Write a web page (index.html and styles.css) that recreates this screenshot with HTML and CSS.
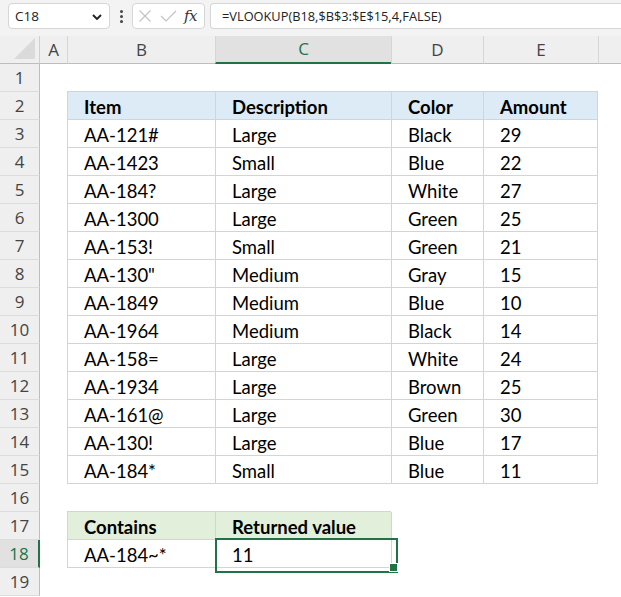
FILE: index.html
```html
<!DOCTYPE html>
<html>
<head>
<meta charset="utf-8">
<link rel="stylesheet" href="styles.css">
</head>
<body>
<div class="toolbar">
  <div class="namebox">
    <span class="name">C18</span>
    <svg class="chev" width="10" height="6" viewBox="0 0 10 6"><path d="M1 1 L5 5 L9 1" fill="none" stroke="#222" stroke-width="1.9"/></svg>
  </div>
  <div class="dots"><span></span><span></span><span></span></div>
  <div class="fxbox">
    <svg width="14" height="12" viewBox="0 0 14 12"><path d="M1.5 0.5 L12.5 11.5 M12.5 0.5 L1.5 11.5" stroke="#c2c2c2" stroke-width="1.1" fill="none"/></svg>
    <svg width="17" height="12" viewBox="0 0 17 12"><path d="M1 6 L6 11 L16 1" stroke="#c2c2c2" stroke-width="1.1" fill="none"/></svg>
    <span class="fx">fx</span>
  </div>
  <div class="formula">=VLOOKUP(B18,$B$3:$E$15,4,FALSE)</div>
</div>
<div class="sheet">
  <div class="corner"><svg width="22" height="22" viewBox="0 0 22 22"><path d="M21 0 L21 21 L0 21 Z" fill="#dadada"/></svg></div>
  <div class="ch first">A</div><div class="ch">B</div><div class="ch sel">C</div><div class="ch">D</div><div class="ch">E</div><div class="ch"></div>

  <div class="rh">1</div><div class="c"></div><div class="c bb"></div><div class="c bb"></div><div class="c bb"></div><div class="c bb"></div><div class="c"></div>

  <div class="rh">2</div><div class="c"></div><div class="c t h">Item</div><div class="c t h">Description</div><div class="c t h">Color</div><div class="c t te h">Amount</div><div class="c"></div>
  <div class="rh">3</div><div class="c"></div><div class="c t">AA-121#</div><div class="c t">Large</div><div class="c t">Black</div><div class="c t te">29</div><div class="c"></div>
  <div class="rh">4</div><div class="c"></div><div class="c t">AA-1423</div><div class="c t">Small</div><div class="c t">Blue</div><div class="c t te">22</div><div class="c"></div>
  <div class="rh">5</div><div class="c"></div><div class="c t">AA-184?</div><div class="c t">Large</div><div class="c t">White</div><div class="c t te">27</div><div class="c"></div>
  <div class="rh">6</div><div class="c"></div><div class="c t">AA-1300</div><div class="c t">Large</div><div class="c t">Green</div><div class="c t te">25</div><div class="c"></div>
  <div class="rh">7</div><div class="c"></div><div class="c t">AA-153!</div><div class="c t">Small</div><div class="c t">Green</div><div class="c t te">21</div><div class="c"></div>
  <div class="rh">8</div><div class="c"></div><div class="c t">AA-130"</div><div class="c t">Medium</div><div class="c t">Gray</div><div class="c t te">15</div><div class="c"></div>
  <div class="rh">9</div><div class="c"></div><div class="c t">AA-1849</div><div class="c t">Medium</div><div class="c t">Blue</div><div class="c t te">10</div><div class="c"></div>
  <div class="rh">10</div><div class="c"></div><div class="c t">AA-1964</div><div class="c t">Medium</div><div class="c t">Black</div><div class="c t te">14</div><div class="c"></div>
  <div class="rh">11</div><div class="c"></div><div class="c t">AA-158=</div><div class="c t">Large</div><div class="c t">White</div><div class="c t te">24</div><div class="c"></div>
  <div class="rh">12</div><div class="c"></div><div class="c t">AA-1934</div><div class="c t">Large</div><div class="c t">Brown</div><div class="c t te">25</div><div class="c"></div>
  <div class="rh">13</div><div class="c"></div><div class="c t">AA-161@</div><div class="c t">Large</div><div class="c t">Green</div><div class="c t te">30</div><div class="c"></div>
  <div class="rh">14</div><div class="c"></div><div class="c t">AA-130!</div><div class="c t">Large</div><div class="c t">Blue</div><div class="c t te">17</div><div class="c"></div>
  <div class="rh">15</div><div class="c"></div><div class="c t">AA-184*</div><div class="c t">Small</div><div class="c t">Blue</div><div class="c t te">11</div><div class="c"></div>

  <div class="rh">16</div><div class="c"></div><div class="c bb"></div><div class="c bb"></div><div class="c"></div><div class="c"></div><div class="c"></div>
  <div class="rh">17</div><div class="c"></div><div class="c t g">Contains</div><div class="c t g">Returned value</div><div class="c bl"></div><div class="c"></div><div class="c"></div>
  <div class="rh rsel">18</div><div class="c"></div><div class="c t">AA-184~*</div><div class="c t active">11</div><div class="c bl"></div><div class="c"></div><div class="c"></div>
  <div class="rh">19</div><div class="c"></div><div class="c"></div><div class="c"></div><div class="c"></div><div class="c"></div><div class="c"></div>
</div>
</body>
</html>
```
FILE: styles.css
```css
* { box-sizing: border-box; }
html, body { margin: 0; padding: 0; background: #ffffff; }
body { width: 621px; height: 597px; overflow: hidden; }

.toolbar {
  height: 36px;
  background: #f3f3f3;
  display: flex;
  align-items: flex-start;
  padding-top: 3px;
  padding-left: 8px;
  font-family: "Open Sans", "Noto Sans", sans-serif;
}
.namebox {
  width: 102px;
  height: 26px;
  background: #fff;
  border: 1px solid #d6d6d6;
  border-radius: 4px;
  display: flex;
  align-items: center;
  justify-content: space-between;
  padding: 0 7px 0 6px;
  font-size: 13.5px;
  color: #222;
}
.chev { margin-top: 1px; }
.dots {
  width: 22px;
  height: 26px;
  display: flex;
  flex-direction: column;
  align-items: center;
  justify-content: center;
  gap: 2px;
}
.dots span { width: 3px; height: 3px; background: #444; border-radius: 50%; }
.fxbox {
  width: 73px;
  height: 26px;
  background: #fff;
  border: 1px solid #d6d6d6;
  border-radius: 4px;
  display: flex;
  align-items: center;
  padding-left: 5px;
  gap: 8px;
}
.fx {
  font-family: "DejaVu Serif", "Liberation Serif", serif;
  font-style: italic;
  font-size: 15px;
  color: #333;
  margin-left: -1px;
  letter-spacing: -0.5px;
}
.formula {
  margin-left: 5px;
  flex: 1;
  height: 26px;
  background: #fff;
  border: 1px solid #d6d6d6;
  border-right: 0;
  border-radius: 4px 0 0 4px;
  padding-left: 11px;
  font-size: 12.8px;
  line-height: 24px;
  color: #222;
  white-space: nowrap;
}

.sheet {
  display: grid;
  grid-template-columns: 40px 27px 148px 176px 92px 115px 1fr;
  grid-auto-rows: 28px;
}
.corner {
  background: #efefef;
  border-right: 1px solid #cfcfcf;
  border-bottom: 1px solid #bdbdbd;
  display: flex;
  align-items: flex-end;
  justify-content: flex-end;
  padding: 0 3px 3px 0;
}
.ch {
  background: #efefef;
  border-left: 1px solid #d6d6d6;
  border-bottom: 1px solid #bdbdbd;
  text-align: center;
  font-family: "Open Sans", "Noto Sans", sans-serif;
  font-size: 17px;
  line-height: 27px;
  color: #444;
}
.ch.first { border-left: 0; }
.ch.sel {
  background: #e1e1e1;
  color: #217346;
  border-bottom: 2px solid #217346;
  line-height: 26px;
}
.rh {
  background: #efefef;
  border-right: 1px solid #bdbdbd;
  border-bottom: 1px solid #dcdcdc;
  text-align: center;
  font-family: "Open Sans", "Noto Sans", sans-serif;
  font-size: 17px;
  line-height: 27px;
  padding-top: 0;
  color: #444;
}
.rh.rsel {
  background: #e1e1e1;
  color: #217346;
  border-right: 2px solid #217346;
}

.c {
  font-family: Lato, "Noto Sans", sans-serif;
  font-size: 18.5px;
  line-height: 24px;
  padding: 3px 0 0 16px;
  color: #000;
  white-space: nowrap;
}
.bb { border-bottom: 1px solid #d4d4d4; }
.bl { border-left: 1px solid #d4d4d4; }
.t { border-left: 1px solid #d4d4d4; border-bottom: 1px solid #d4d4d4; }
.te { border-right: 1px solid #d4d4d4; }
.h { background: #ddebf7; font-weight: bold; }
.g { background: #e2efda; font-weight: bold; }

.active { position: relative; }
.active::before {
  content: "";
  position: absolute;
  left: -1px;
  top: -2px;
  width: 179px;
  height: 31px;
  border: 2px solid #217346;
}
.active::after {
  content: "";
  position: absolute;
  left: 173px;
  top: 23px;
  width: 7px;
  height: 7px;
  background: #217346;
  border: 1px solid #fff;
}
```
